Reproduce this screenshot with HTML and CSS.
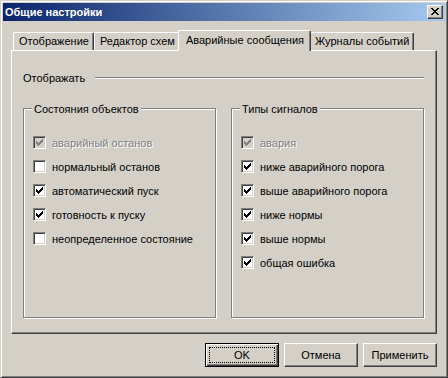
FILE: index.html
```html
<html>
  <head>
    <link rel="stylesheet" href="styles.css">
  </head>
  <body class="body">
    <svg class="defs" width="0" height="0">
      <symbol id="check" viewBox="0 0 7 7">
        <path d="M0 2h1v3H0zM1 3h1v3H1zM2 4h1v3H2zM3 3h1v3H3zM4 2h1v3H4zM5 1h1v3H5zM6 0h1v3H6z"/>
      </symbol>
    </svg>

    <div class="Window">
      <div class="Window-title">
        <span class="Window-caption">Общие настройки</span>
        <span class="Window-close">
          <svg width="8" height="7" viewBox="0 0 8 7">
            <path d="M0 0h2v1H0zM6 0h2v1H6zM1 1h2v1H1zM5 1h2v1H5zM2 2h4v1H2zM3 3h2v1H3zM2 4h4v1H2zM1 5h2v1H1zM5 5h2v1H5zM0 6h2v1H0zM6 6h2v1H6z"/>
          </svg>
        </span>
      </div>

      <div class="Tabs">
        <div class="Tab">Отображение</div>
        <div class="Tab">Редактор схем</div>
        <div class="Tab Tab--active">Аварийные сообщения</div>
        <div class="Tab">Журналы событий</div>
      </div>

      <div class="Panel">
        <div class="Separator">
          <span>Отображать</span>
          <i class="Separator-line"></i>
        </div>

        <div class="Groups">
          <div class="Group">
            <span class="Group-title">Состояния объектов</span>
            <div class="Options">
              <div class="Option Option--disabled"><span class="Checkbox"><svg><use href="#check"/></svg></span>аварийный останов</div>
              <div class="Option"><span class="Checkbox"></span>нормальный останов</div>
              <div class="Option"><span class="Checkbox"><svg><use href="#check"/></svg></span>автоматический пуск</div>
              <div class="Option"><span class="Checkbox"><svg><use href="#check"/></svg></span>готовность к пуску</div>
              <div class="Option"><span class="Checkbox"></span>неопределенное состояние</div>
            </div>
          </div>

          <div class="Group">
            <span class="Group-title">Типы сигналов</span>
            <div class="Options">
              <div class="Option Option--disabled"><span class="Checkbox"><svg><use href="#check"/></svg></span>авария</div>
              <div class="Option"><span class="Checkbox"><svg><use href="#check"/></svg></span>ниже аварийного порога</div>
              <div class="Option"><span class="Checkbox"><svg><use href="#check"/></svg></span>выше аварийного порога</div>
              <div class="Option"><span class="Checkbox"><svg><use href="#check"/></svg></span>ниже нормы</div>
              <div class="Option"><span class="Checkbox"><svg><use href="#check"/></svg></span>выше нормы</div>
              <div class="Option"><span class="Checkbox"><svg><use href="#check"/></svg></span>общая ошибка</div>
            </div>
          </div>
        </div>
      </div>

      <div class="Buttons">
        <button class="Button Button--default">OK</button>
        <button class="Button">Отмена</button>
        <button class="Button">Применить</button>
      </div>
    </div>
  </body>
</html>
```

FILE: styles.css
```css
html, body {
  padding: 0;
  margin: 0;
  font-family: "Liberation Sans", Arial, sans-serif;
  font-size: 11px;
  color: #000;
  background: #d4d0c8;
}
.defs {
  position: absolute;
}

.Window {
  box-sizing: border-box;
  width: 448px;
  height: 378px;
  padding: 2px;
  border: 1px solid;
  border-color: #d4d0c8 #404040 #404040 #d4d0c8;
  box-shadow: inset 1px 1px #fff, inset -1px -1px #808080;
  background: #d4d0c8;
}

.Window-title {
  display: flex;
  align-items: center;
  justify-content: space-between;
  height: 18px;
  padding: 0 2px;
  background: linear-gradient(to right, #0a246a, #a6caf0);
}
.Window-caption {
  color: #fff;
  font-weight: bold;
  line-height: 18px;
}
.Window-close {
  box-sizing: border-box;
  display: flex;
  align-items: center;
  justify-content: center;
  width: 16px;
  height: 14px;
  padding: 0 1px 1px 0;
  border: 1px solid;
  border-color: #fff #404040 #404040 #fff;
  box-shadow: inset -1px -1px #808080;
  background: #d4d0c8;
}

.Tabs {
  display: flex;
  align-items: flex-end;
  height: 20px;
  margin: 9px 8px 0;
  padding-left: 2px;
}
.Tab {
  box-sizing: border-box;
  height: 18px;
  padding: 0 4px 0 5px;
  line-height: 16px;
  white-space: nowrap;
  border: 1px solid;
  border-bottom: none;
  border-color: #fff #404040 #fff #fff;
  border-radius: 2px 2px 0 0;
  box-shadow: inset -1px 0 #808080;
  background: #d4d0c8;
}
.Tab--active {
  position: relative;
  z-index: 1;
  height: 21px;
  margin: 0 -2px -1px;
  padding: 0 6px 2px 7px;
  line-height: 18px;
}

.Panel {
  box-sizing: border-box;
  height: 284px;
  margin: 0 8px;
  padding: 20px 12px 0 11px;
  border: 1px solid;
  border-color: #fff #404040 #404040 #fff;
  box-shadow: inset -1px -1px #808080;
}

.Separator {
  display: flex;
  align-items: center;
  gap: 10px;
  line-height: 14px;
}
.Separator-line {
  flex: 1;
  border-top: 1px solid #808080;
  border-bottom: 1px solid #fff;
}

.Groups {
  display: grid;
  grid-template-columns: 1fr 1fr;
  column-gap: 15px;
  margin-top: 23px;
}
.Group {
  box-sizing: border-box;
  height: 210px;
  padding: 0 9px;
  border: 1px solid #808080;
  box-shadow: inset 1px 1px #fff, 1px 1px #fff;
}
.Group-title {
  display: table;
  margin: -7px 0 0 -1px;
  padding: 0 2px;
  line-height: 14px;
  background: #d4d0c8;
}

.Options {
  display: flex;
  flex-direction: column;
  gap: 11px;
  margin-top: 20px;
}
.Option {
  display: flex;
  align-items: center;
  gap: 6px;
  height: 13px;
  white-space: nowrap;
}
.Option--disabled {
  color: #808080;
  text-shadow: 1px 1px #fff;
}

.Checkbox {
  box-sizing: border-box;
  display: flex;
  align-items: center;
  justify-content: center;
  flex: none;
  width: 13px;
  height: 13px;
  border: 1px solid;
  border-color: #808080 #fff #fff #808080;
  box-shadow: inset 1px 1px #404040, inset -1px -1px #d4d0c8;
  background: #fff;
}
.Checkbox svg {
  width: 7px;
  height: 7px;
  fill: #000;
  shape-rendering: crispEdges;
}
.Option--disabled .Checkbox {
  background: #d4d0c8;
}
.Option--disabled .Checkbox svg {
  fill: #808080;
}

.Buttons {
  display: flex;
  justify-content: flex-end;
  gap: 5px;
  margin-top: 9px;
  padding-right: 8px;
}
.Button {
  box-sizing: border-box;
  width: 74px;
  height: 24px;
  padding: 0;
  font: inherit;
  color: #000;
  background: #d4d0c8;
  border: 1px solid;
  border-color: #fff #404040 #404040 #fff;
  box-shadow: inset -1px -1px #808080;
}
.Button--default {
  border-color: #000;
  box-shadow: inset 1px 1px #fff, inset -1px -1px #404040, inset -2px -2px #808080;
  outline: 1px dotted #000;
  outline-offset: -5px;
}
```
